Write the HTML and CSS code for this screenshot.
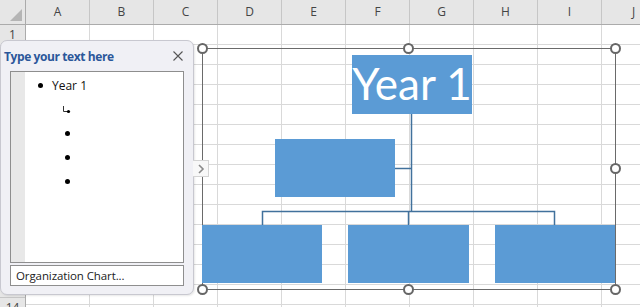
FILE: index.html
```html
<!DOCTYPE html>
<html lang="en">
<head>
  <meta charset="UTF-8" />
  <title>SmartArt Org Chart</title>
  <link rel="stylesheet" href="styles.css">
</head>
<body>
  <div class="sheet">
    <div class="corner"><span class="corner-tri"></span></div>
    <div class="col-heads">
      <div>A</div><div>B</div><div>C</div><div>D</div><div>E</div>
      <div>F</div><div>G</div><div>H</div><div>I</div><div>J</div>
    </div>
    <div class="row-heads">
      <div>1</div><div>2</div><div>3</div><div>4</div><div>5</div><div>6</div><div>7</div>
      <div>8</div><div>9</div><div>10</div><div>11</div><div>12</div><div>13</div><div>14</div>
    </div>
    <div class="cells"></div>
  </div>

  <!-- text pane -->
  <div class="pane">
    <div class="pane-head">
      <span class="pane-title">Type your text here</span>
      <svg class="close" width="10" height="10" viewBox="0 0 10 10">
        <path d="M0.5 0.5 L9.5 9.5 M9.5 0.5 L0.5 9.5" stroke="#555" stroke-width="1.1" fill="none"/>
      </svg>
    </div>
    <div class="list-box">
      <div class="gutter"></div>
      <div class="list">
        <div class="item"><span class="dot"></span><span>Year 1</span></div>
        <div class="item sub">
          <svg class="hook" width="8" height="8" viewBox="0 0 8 8">
            <path d="M0.5 0 L0.5 5.5 L5 5.5" stroke="#333" stroke-width="1" fill="none"/>
            <circle cx="5.5" cy="5.5" r="1.6" fill="#000"/>
          </svg>
        </div>
        <div class="item sub"><span class="dot"></span></div>
        <div class="item sub"><span class="dot"></span></div>
        <div class="item sub"><span class="dot"></span></div>
      </div>
    </div>
    <div class="org-btn">Organization Chart...</div>
  </div>
  <div class="expand">
    <svg width="8" height="10" viewBox="0 0 8 10">
      <path d="M2 1 L6 5 L2 9" stroke="#8a8a8a" stroke-width="1.6" fill="none"/>
    </svg>
  </div>

  <!-- smartart frame -->
  <div class="smartart">
    <svg class="links" width="413" height="241" viewBox="0 0 413 241">
      <g stroke="#41719c" stroke-width="1.5" fill="none">
        <path d="M209.5 66 L209.5 164"/>
        <path d="M193 120.5 L209.5 120.5"/>
        <path d="M60.5 177 L60.5 163.5 L352.5 163.5 L352.5 177"/>
        <path d="M206.5 163.5 L206.5 177"/>
      </g>
    </svg>
    <div class="node top">Year 1</div>
    <div class="node assistant"></div>
    <div class="node child c1"></div>
    <div class="node child c2"></div>
    <div class="node child c3"></div>
    <span class="handle h-tl"></span>
    <span class="handle h-tc"></span>
    <span class="handle h-tr"></span>
    <span class="handle h-mr"></span>
    <span class="handle h-bl"></span>
    <span class="handle h-bc"></span>
    <span class="handle h-br"></span>
  </div>
</body>
</html>
```

FILE: styles.css
```css
body {
  margin: 0;
  width: 640px;
  height: 307px;
  overflow: hidden;
  position: relative;
  background: #fff;
  font-family: 'Segoe UI', 'Open Sans', sans-serif;
}
.sheet {
  display: grid;
  grid-template-columns: 26px 1fr;
  grid-template-rows: 25px 1fr;
  height: 307px;
}
.corner {
  background: #e6e6e6;
  border-right: 1px solid #ababab;
  border-bottom: 1px solid #ababab;
  box-sizing: border-box;
  position: relative;
}
.corner-tri {
  position: absolute;
  right: 3px;
  bottom: 3px;
  width: 0;
  height: 0;
  border-left: 12px solid transparent;
  border-bottom: 12px solid #b5b5b5;
}
.col-heads {
  display: flex;
  background: #e6e6e6;
  border-bottom: 1px solid #ababab;
  box-sizing: border-box;
  overflow: hidden;
}
.col-heads div {
  flex: 0 0 64px;
  box-sizing: border-box;
  border-right: 1px solid #c6c6c6;
  text-align: center;
  font-size: 12px;
  line-height: 24px;
  color: #444;
}
.row-heads {
  display: flex;
  flex-direction: column;
  background: #e6e6e6;
  border-right: 1px solid #ababab;
  box-sizing: border-box;
  overflow: hidden;
}
.row-heads div {
  flex: 0 0 20px;
  box-sizing: border-box;
  border-bottom: 1px solid #c6c6c6;
  text-align: center;
  font-size: 12px;
  line-height: 20px;
  color: #444;
}
.cells {
  background-image:
    linear-gradient(to right, #d9d9d9 1px, transparent 1px),
    linear-gradient(to bottom, #d9d9d9 1px, transparent 1px);
  background-size: 64px 20px;
  background-position: 63px 19px;
}

/* text pane */
.pane {
  position: absolute;
  z-index: 2;
  left: 0;
  top: 40px;
  width: 194px;
  height: 255px;
  box-sizing: border-box;
  background: #f0f0f5;
  border: 1px solid #c8c8d0;
  border-radius: 7px;
  box-shadow: 1px 1px 2px #00000018;
}
.pane-head {
  height: 30px;
  display: flex;
  align-items: center;
  justify-content: space-between;
  padding: 0 10px 0 3px;
}
.pane-title {
  font-weight: bold;
  font-size: 12px;
  color: #2b579a;
  letter-spacing: -0.4px;
}
.close {
  display: block;
}
.list-box {
  margin-left: 9px;
  width: 174px;
  height: 192px;
  box-sizing: border-box;
  border: 1px solid #8e8e8e;
  background: #fff;
  display: flex;
}
.gutter {
  width: 14px;
  background: #e8e8e8;
}
.list {
  flex: 1;
  padding-top: 1px;
}
.item {
  height: 24px;
  display: flex;
  align-items: center;
  padding-left: 13px;
  font-size: 12px;
  color: #111;
}
.item .dot {
  width: 5px;
  height: 5px;
  border-radius: 50%;
  background: #000;
  margin-right: 9px;
}
.item.sub {
  padding-left: 40px;
}
.hook {
  display: block;
  margin-left: -2px;
  margin-top: 1px;
}
.org-btn {
  margin: 2px 0 0 9px;
  width: 174px;
  height: 21px;
  box-sizing: border-box;
  border: 1px solid #8e8e8e;
  background: #fff;
  font-size: 11.5px;
  font-weight: 500;
  line-height: 19px;
  padding-left: 5px;
  color: #222;
  letter-spacing: -0.1px;
}
.expand {
  position: absolute;
  z-index: 3;
  left: 193px;
  top: 160px;
  width: 16px;
  height: 17px;
  box-sizing: border-box;
  background: #f8f8f8;
  border: 1px solid #d4d4d4;
  border-left: none;
  display: flex;
  align-items: center;
  justify-content: center;
}
.expand svg {
  display: block;
}

/* smartart */
.smartart {
  position: absolute;
  z-index: 1;
  left: 202px;
  top: 48px;
  width: 414px;
  height: 242px;
  box-sizing: border-box;
  border: 1px solid #6a6a6a;
}
.links {
  position: absolute;
  left: -1px;
  top: -1px;
}
.node {
  position: absolute;
  background: #5b9bd5;
}
.node.top {
  left: 149px;
  top: 6px;
  width: 120px;
  height: 59px;
  color: #fff;
  font-family: Lato, 'Open Sans', sans-serif;
  font-size: 44px;
  line-height: 56px;
  text-align: center;
}
.node.assistant {
  left: 72px;
  top: 90px;
  width: 120px;
  height: 58px;
}
.node.child {
  top: 176px;
  height: 58px;
  width: 120px;
}
.node.c1 { left: -1px; }
.node.c2 { left: 145px; width: 121px; }
.node.c3 { left: 292px; }
.handle {
  position: absolute;
  width: 11px;
  height: 11px;
  box-sizing: border-box;
  border: 2px solid #666;
  border-radius: 50%;
  background: #fff;
  margin: -6px 0 0 -6px;
}
.h-tl { left: 0; top: 0; }
.h-tc { left: 206px; top: 0; }
.h-tr { left: 413px; top: 0; }
.h-mr { left: 413px; top: 120px; }
.h-bl { left: 0; top: 241px; }
.h-bc { left: 206px; top: 241px; }
.h-br { left: 413px; top: 241px; }
```
